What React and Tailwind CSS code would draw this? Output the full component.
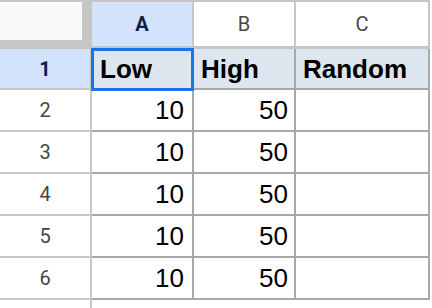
import React from 'react';

const rows = [2, 3, 4, 5, 6];

export default function App() {
  return (
    <div className="w-[432px] h-[308px] bg-white overflow-hidden font-['Liberation_Sans',Arial,sans-serif]">
      {/* header row */}
      <div className="flex h-[49px]">
        <div className="w-[92px] h-[49px] bg-[#c4c7c5] pt-[2px]">
          <div className="w-[82px] h-[38px] bg-[#f8f9fa]" />
        </div>
        <div className="w-[102px] border-t-2 border-b-[3px] border-r-2 border-[#c4c7c5] bg-[#d3e3fd] flex items-center justify-center font-['Roboto',sans-serif] text-[20px] font-bold text-[#0b1f4f]">
          A
        </div>
        <div className="w-[102px] border-t-2 border-b-[3px] border-r-2 border-[#c4c7c5] flex items-center justify-center font-['Roboto',sans-serif] text-[20px] text-[#444746]">
          B
        </div>
        <div className="w-[134px] border-t-2 border-b-[3px] border-r-2 border-[#c4c7c5] flex items-center justify-center font-['Roboto',sans-serif] text-[20px] text-[#444746]">
          C
        </div>
      </div>

      {/* row 1 */}
      <div className="flex h-[41px]">
        <div className="w-[92px] border-r-2 border-b-2 border-[#c4c7c5] bg-[#d3e3fd] flex items-center justify-center font-['Roboto',sans-serif] text-[20px] font-bold text-[#0b1f4f]">
          1
        </div>
        <div className="relative w-[102px] border-r-2 border-b-2 border-[#a8a8a8] bg-[#dde5ef] flex items-center pl-[8px] pt-[2px] text-[26px] font-bold text-black">
          Low
          <div className="absolute -top-px -left-px -right-[2px] -bottom-[3px] border-[3px] border-[#1a73e8]" />
        </div>
        <div className="w-[102px] border-r-2 border-b-2 border-[#a8a8a8] bg-[#dde5ef] flex items-center pl-[7px] pt-[2px] text-[26px] font-bold text-black">
          High
        </div>
        <div className="w-[134px] border-r-2 border-b-2 border-[#a8a8a8] bg-[#dde5ef] flex items-center pl-[7px] pt-[2px] text-[26px] font-bold text-black">
          Random
        </div>
      </div>

      {/* data rows */}
      {rows.map((n) => (
        <div key={n} className="flex h-[42px]">
          <div className="w-[92px] border-r-2 border-b-2 border-[#c4c7c5] flex items-center justify-center font-['Roboto',sans-serif] text-[20px] text-[#444746]">
            {n}
          </div>
          <div className="w-[102px] border-r-2 border-b-2 border-[#a8a8a8] flex items-center justify-end pr-[8px] text-[26px] text-black">
            10
          </div>
          <div className="w-[102px] border-r-2 border-b-2 border-[#a8a8a8] flex items-center justify-end pr-[6px] text-[26px] text-black">
            50
          </div>
          <div className="w-[134px] border-r-2 border-b-2 border-[#a8a8a8]" />
        </div>
      ))}

      <div className="flex h-[8px]">
        <div className="w-[92px] border-r-2 border-[#c4c7c5]" />
      </div>
    </div>
  );
}
